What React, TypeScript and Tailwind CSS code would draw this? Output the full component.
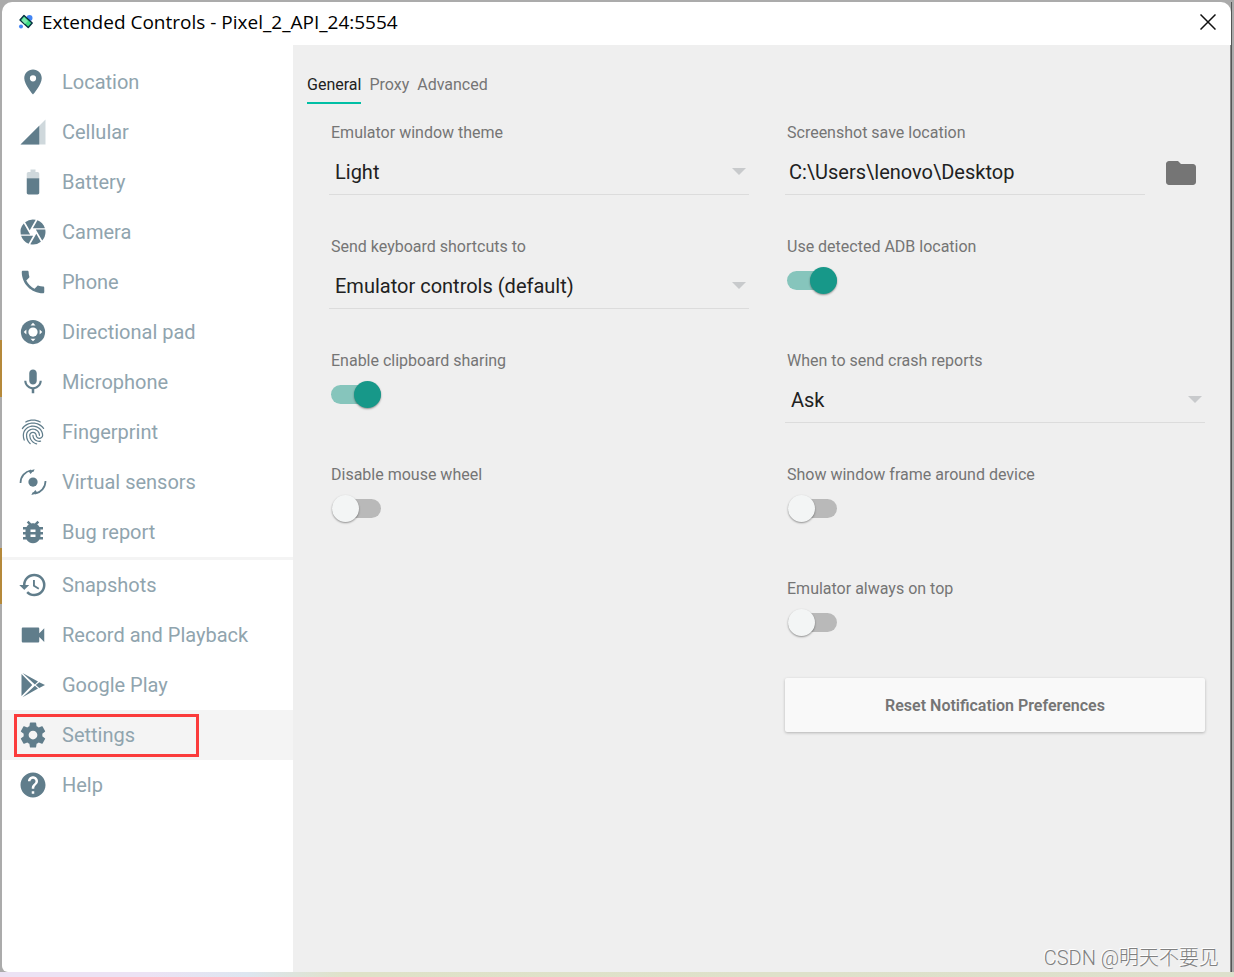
import { useState } from "react";
import type { ReactNode } from "react";
import {
  MdBugReport,
  MdCamera,
  MdFingerprint,
  MdFolder,
  MdHelp,
  MdHistory,
  MdLocationOn,
  MdMic,
  MdPhone,
  MdVideocam,
} from "react-icons/md";

function Svg({ children }: { children: ReactNode }) {
  return (
    <svg viewBox="0 0 24 24" width={30} height={30} fill="currentColor" aria-hidden="true">
      {children}
    </svg>
  );
}

const CellularIcon = () => (
  <Svg>
    <path fillOpacity=".3" d="M2 22h20V2z" />
    <path d="M17 7L2 22h15z" />
  </Svg>
);

const BatteryIcon = () => (
  <Svg>
    <path fillOpacity=".3" d="M17 5.33C17 4.6 16.4 4 15.67 4H14V2h-4v2H8.33C7.6 4 7 4.6 7 5.33V9h10V5.33z" />
    <path d="M7 9v11.67C7 21.4 7.6 22 8.33 22h7.33c.74 0 1.34-.6 1.34-1.33V9H7z" />
  </Svg>
);

const DpadIcon = () => (
  <Svg>
    <circle cx="12" cy="12" r="9.7" />
    <circle cx="12" cy="12" r="3.7" fill="#fff" />
    <path
      fill="#fff"
      d="M12 4.6l2 2.1h-4zM12 19.4l2-2.1h-4zM4.6 12l2.1-2v4zM19.4 12l-2.1-2v4z"
    />
  </Svg>
);

const SensorsIcon = () => (
  <Svg>
    <circle cx="12" cy="12" r="3.7" />
    <path
      fill="none"
      stroke="currentColor"
      strokeWidth="1.4"
      d="M2 12.8C2 7.6 5.6 3.6 10.6 2.6M22 11.2C22 16.4 18.4 20.4 13.4 21.4"
    />
    <path d="M8.2 3.1l5.1-1.4-.9 2-1 .3-1.3 1.6zM15.8 20.9l-5.1 1.4.9-2 1-.3 1.3-1.6z" />
  </Svg>
);

const PlayIcon = () => (
  <Svg>
    <path d="M2.8 3.2v17.6L11.4 12zM3.6 2.3l12.4 6.9-2.5 2.3zM3.6 21.7l12.4-6.9-2.5-2.3zM17 9.7l4.6 2.3-4.6 2.3-2.8-2.3z" />
  </Svg>
);

const GearIcon = () => (
  <Svg>
    <path d="M19.43 12.98c.04-.32.07-.64.07-.98s-.03-.66-.07-.98l2.11-1.65c.19-.15.24-.42.12-.64l-2-3.46c-.12-.22-.39-.3-.61-.22l-2.49 1c-.52-.4-1.08-.73-1.69-.98l-.38-2.65C14.46 2.18 14.25 2 14 2h-4c-.25 0-.46.18-.49.42l-.38 2.65c-.61.25-1.17.59-1.69.98l-2.49-1c-.23-.09-.49 0-.61.22l-2 3.46c-.13.22-.07.49.12.64l2.11 1.65c-.04.32-.07.65-.07.98s.03.66.07.98l-2.11 1.65c-.19.15-.24.42-.12.64l2 3.46c.12.22.39.3.61.22l2.49-1c.52.4 1.08.73 1.69.98l.38 2.65c.03.24.24.42.49.42h4c.25 0 .46-.18.49-.42l.38-2.65c.61-.25 1.17-.59 1.69-.98l2.49 1c.23.09.49 0 .61-.22l2-3.46c.12-.22.07-.49-.12-.64l-2.11-1.65zM12 15.5c-1.93 0-3.5-1.57-3.5-3.5s1.57-3.5 3.5-3.5 3.5 1.57 3.5 3.5-1.57 3.5-3.5 3.5z" />
  </Svg>
);

const deviceItems = [
  { label: "Location", icon: <MdLocationOn size={30} /> },
  { label: "Cellular", icon: <CellularIcon /> },
  { label: "Battery", icon: <BatteryIcon /> },
  { label: "Camera", icon: <MdCamera size={30} /> },
  { label: "Phone", icon: <MdPhone size={30} /> },
  { label: "Directional pad", icon: <DpadIcon /> },
  { label: "Microphone", icon: <MdMic size={30} /> },
  { label: "Fingerprint", icon: <MdFingerprint size={30} /> },
  { label: "Virtual sensors", icon: <SensorsIcon /> },
  { label: "Bug report", icon: <MdBugReport size={30} /> },
];

const appItems = [
  { label: "Snapshots", icon: <MdHistory size={30} /> },
  { label: "Record and Playback", icon: <MdVideocam size={30} /> },
  { label: "Google Play", icon: <PlayIcon /> },
  { label: "Settings", icon: <GearIcon /> },
  { label: "Help", icon: <MdHelp size={30} /> },
];

function NavItem({ label, icon, active }: { label: string; icon: ReactNode; active: boolean }) {
  return (
    <li>
      <button
        type="button"
        aria-current={active ? "page" : undefined}
        className={`relative flex h-[50px] w-full items-center gap-[14px] pl-4 text-left text-xl text-[#90a4ae] ${active ? "bg-[#f4f4f4]" : ""}`}
      >
        <span className="text-[#607d8b]">{icon}</span>
        {label}
        {active && <span className="absolute top-1 left-3 h-[43px] w-[185px] border-3 border-[#fb3b3b]" />}
      </button>
    </li>
  );
}

function Field({ id, label, children }: { id: string; label: string; children: ReactNode }) {
  return (
    <div className="h-[114px]">
      <label htmlFor={id} className="block pt-0.5 pl-0.5 text-base leading-6 text-[#757575]">
        {label}
      </label>
      {children}
    </div>
  );
}

function SelectField({ id, label, options }: { id: string; label: string; options: string[] }) {
  return (
    <Field id={id} label={label}>
      <div className="mt-[3px] flex items-center border-b border-[#dcdcdc] pr-[3px]">
        <select id={id} className="h-[46px] min-w-0 flex-1 appearance-none pt-0.5 pl-1.5 text-xl text-[#212121]">
          {options.map((o) => (
            <option key={o}>{o}</option>
          ))}
        </select>
        <svg width="14" height="7" viewBox="0 0 14 7" fill="#c8cacc" aria-hidden="true">
          <path d="M0 0h14L7 7z" />
        </svg>
      </div>
    </Field>
  );
}

function SwitchField({ id, label, on = false }: { id: string; label: string; on?: boolean }) {
  const [checked, setChecked] = useState(on);
  return (
    <Field id={id} label={label}>
      <div
        className={`mt-3 ml-0.5 flex h-[19px] w-[50px] items-center rounded-full ${checked ? "justify-end bg-[#86c5bc]" : "bg-[#b9b9b9] bg-clip-content pl-px"}`}
      >
        <input
          id={id}
          type="checkbox"
          role="switch"
          checked={checked}
          onChange={(e) => setChecked(e.target.checked)}
          className="size-[27px] shrink-0 appearance-none rounded-full bg-[#f3f5f5] shadow-[0_1px_2px_rgba(0,0,0,0.4)] checked:bg-[#179889]"
        />
      </div>
    </Field>
  );
}

export default function App() {
  const [tab, setTab] = useState("General");

  return (
    <div className="flex min-h-screen flex-col bg-[#ababab] pt-0.5 font-[Roboto,'Noto_Sans_CJK_SC',sans-serif]">
      <div className="flex flex-1">
        {/* slivers of the desktop either side of the window */}
        <div aria-hidden="true" className="w-0.5 bg-[linear-gradient(#ababab_338px,#b5893a_338px,#b5893a_395px,#ababab_395px,#ababab_546px,#b5893a_546px,#b5893a_602px,#ababab_602px)]" />
        <div className="flex min-w-0 flex-1 flex-col overflow-hidden rounded-t-[10px] rounded-bl-md bg-white">
          <header className="flex h-[43px] items-center pr-[13px] pb-[3px] pl-4">
            <svg width="16" height="16" viewBox="0 0 16 16" aria-hidden="true">
              <circle cx="11.5" cy="4" r="3" fill="#4285f4" />
              <circle cx="3" cy="12.5" r="2" fill="#4285f4" />
              <path d="M6 1.5l8.2 7.5-4 4.5L2 6z" fill="#3ddc84" stroke="#073042" strokeWidth="1.4" strokeLinejoin="round" />
              <path d="M6 3.2L10 7l-3 3-3.4-3.6z" fill="#7ee8ae" />
            </svg>
            <h1 className="ml-2 flex-1 font-['Open_Sans',sans-serif] text-[19px] leading-7 text-black">
              Extended Controls - Pixel_2_API_24:5554
            </h1>
            <button type="button" aria-label="Close" className="p-0.5">
              <svg width="16" height="16" viewBox="0 0 16 16" stroke="#111" strokeWidth="1.5" aria-hidden="true">
                <path d="M.5.5l15 15M15.5.5l-15 15" />
              </svg>
            </button>
          </header>

          <div className="flex flex-1">
            <nav className="w-[291px] shrink-0 pt-3">
              <ul>
                {deviceItems.map((i) => (
                  <NavItem key={i.label} {...i} active={false} />
                ))}
              </ul>
              <ul className="border-t-3 border-[#f4f4f4]">
                {appItems.map((i) => (
                  <NavItem key={i.label} {...i} active={i.label === "Settings"} />
                ))}
              </ul>
            </nav>

            <main className="flex min-w-0 flex-1 flex-col border-r border-[#8a8a8a] bg-[#efefef] pt-5">
              <div role="tablist" className="flex gap-2 pl-[14px]">
                {["General", "Proxy", "Advanced"].map((t) => (
                  <button
                    key={t}
                    type="button"
                    role="tab"
                    aria-selected={tab === t}
                    onClick={() => setTab(t)}
                    className={`h-[39px] border-b-2 pt-0.5 text-base ${tab === t ? "border-[#00bfa5] text-[#212121]" : "border-transparent text-[#757575]"}`}
                  >
                    {t}
                  </button>
                ))}
              </div>

              <div className="grid grid-cols-2 gap-9 pt-[15px] pr-[25px] pl-9">
                <div>
                  <SelectField id="theme" label="Emulator window theme" options={["Light", "Dark"]} />
                  <SelectField
                    id="shortcuts"
                    label="Send keyboard shortcuts to"
                    options={["Emulator controls (default)", "Virtual device"]}
                  />
                  <SwitchField id="clipboard" label="Enable clipboard sharing" on />
                  <SwitchField id="wheel" label="Disable mouse wheel" />
                </div>
                <div>
                  <Field id="save" label="Screenshot save location">
                    <div className="mt-[3px] flex items-center gap-[18px] pr-1.5">
                      <input
                        id="save"
                        type="text"
                        defaultValue="C:\Users\lenovo\Desktop"
                        className="h-[47px] min-w-0 flex-1 border-b border-[#dcdcdc] pt-0.5 pl-1 text-xl text-[#212121]"
                      />
                      <button type="button" aria-label="Choose folder" className="pt-0.5 text-[#757575]">
                        <MdFolder size={36} />
                      </button>
                    </div>
                  </Field>
                  <SwitchField id="adb" label="Use detected ADB location" on />
                  <SelectField id="crash" label="When to send crash reports" options={["Ask", "Always", "Never"]} />
                  <SwitchField id="frame" label="Show window frame around device" />
                  <SwitchField id="top" label="Emulator always on top" />
                  <button
                    type="button"
                    className="-mt-[11px] h-[54px] w-full rounded-xs bg-[#f9f9f9] pt-0.5 text-base font-semibold text-[#757575] shadow-[0_1px_3px_rgba(0,0,0,0.25)]"
                  >
                    Reset Notification Preferences
                  </button>
                </div>
              </div>

              <p className="mt-auto pr-[11px] text-right text-xl leading-7 font-light text-[#808080] [text-shadow:-1px_-1px_0_#fff]">
                CSDN @明天不要见
              </p>
            </main>
          </div>
        </div>
        <div aria-hidden="true" className="w-[3px] border-l border-[#555]" />
      </div>
      <div
        aria-hidden="true"
        className="h-[5px] bg-[linear-gradient(90deg,#ece2f4,#ece2f4_12%,#dde6f0_20%,#dfe2c8_28%,#dde0cc)]"
      />
    </div>
  );
}
